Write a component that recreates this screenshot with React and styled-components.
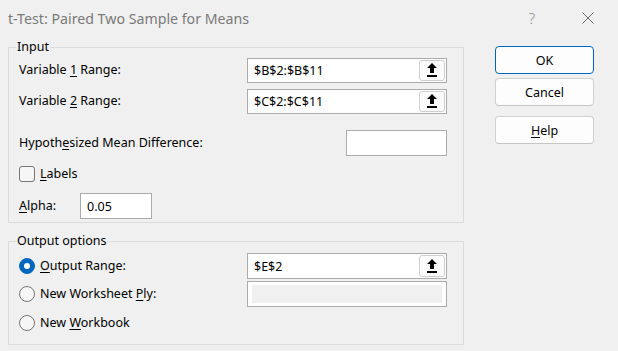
import React from 'react';
import styled, { createGlobalStyle } from 'styled-components';

const Global = createGlobalStyle`
  html, body { margin: 0; padding: 0; background: #f0f0f0; }
  body { font-family: "Noto Sans", "Open Sans", sans-serif; }
  #root { width: 618px; height: 351px; }
`;

const Window = styled.div`
  width: 618px;
  height: 351px;
  background: #f0f0f0;
  display: flex;
  flex-direction: column;
  overflow: hidden;
  color: #000;
  font-size: 12.5px;
`;

const TitleBar = styled.div`
  flex: none;
  height: 36px;
  display: flex;
  align-items: center;
  padding: 0 24px 0 8px;
  gap: 47px;
`;

const Title = styled.div`
  flex: 1;
  font-size: 14.2px;
  color: #7a7a7a;
  white-space: nowrap;
`;

const HelpGlyph = styled.span`
  font-size: 15px;
  color: #8a8a8a;
  font-weight: 300;
`;

const Body = styled.div`
  display: flex;
  padding: 3px 0 0 8px;
  gap: 31px;
`;

const LeftColumn = styled.div`
  width: 456px;
  display: flex;
  flex-direction: column;
  gap: 10px;
`;

const GroupBox = styled.fieldset`
  margin: 0;
  padding: 0 16px 0 7px;
  border: 1px solid #dcdcdc;
  min-width: 0;
`;

const Legend = styled.legend`
  padding: 0 1px;
  line-height: 16px;
  font-size: 12.5px;
`;

const GroupContent = styled.div`
  display: flex;
  flex-direction: column;
  padding: ${p => p.$top}px 0 ${p => p.$bottom}px 3px;
`;

const Row = styled.div`
  display: flex;
  align-items: center;
  justify-content: ${p => p.$spread ? 'space-between' : 'flex-start'};
  height: ${p => p.$h}px;
  margin-top: ${p => p.$mt || 0}px;
  gap: ${p => p.$gap || 0}px;
`;

const Label = styled.span`
  white-space: nowrap;
  line-height: 16px;
  width: ${p => p.$w ? `${p.$w}px` : 'auto'};
`;

const Key = styled.span`
  text-decoration: underline;
  text-underline-offset: 2px;
  text-decoration-thickness: 1px;
`;

const FieldBox = styled.div`
  box-sizing: border-box;
  width: ${p => p.$w}px;
  height: ${p => p.$h}px;
  border: 1px solid #ababab;
  background: #fff;
  display: flex;
  align-items: center;
  padding: ${p => p.$disabled ? '3px 4px' : '1px'};
`;

const FieldText = styled.span`
  flex: 1;
  padding-left: 5px;
  white-space: nowrap;
`;

const DisabledFill = styled.div`
  flex: 1;
  align-self: stretch;
  background: #f0f0f0;
`;

const PickButton = styled.div`
  box-sizing: border-box;
  width: 26px;
  align-self: stretch;
  border: 1px solid #cfcfcf;
  border-radius: 3px;
  background: #fbfbfb;
  display: flex;
  align-items: center;
  justify-content: center;
`;

const CheckBox = styled.span`
  box-sizing: border-box;
  width: 16px;
  height: 16px;
  border: 1px solid #767676;
  border-radius: 3px;
  background: #f6f6f6;
  flex: none;
`;

const Radio = styled.span`
  box-sizing: border-box;
  width: 16px;
  height: 16px;
  border-radius: 50%;
  flex: none;
  display: flex;
  align-items: center;
  justify-content: center;
  border: ${p => p.$on ? '1px solid #0067c0' : '1px solid #767676'};
  background: ${p => p.$on ? '#0067c0' : '#f6f6f6'};
  &::after {
    content: '';
    display: ${p => p.$on ? 'block' : 'none'};
    width: 6px;
    height: 6px;
    border-radius: 50%;
    background: #fff;
  }
`;

const ButtonColumn = styled.div`
  width: 99px;
  display: flex;
  flex-direction: column;
  padding-top: 7px;
`;

const DialogButton = styled.div`
  box-sizing: border-box;
  height: 28px;
  margin-top: ${p => p.$mt || 0}px;
  border: 1px solid ${p => p.$primary ? '#0067c0' : '#d0d0d0'};
  border-bottom-color: ${p => p.$primary ? '#0067c0' : '#c4c4c4'};
  border-radius: 4px;
  background: #fdfdfd;
  display: flex;
  align-items: center;
  justify-content: center;
`;

const UploadIcon = () => (
  <svg width="10" height="14" viewBox="0 0 10 14">
    <polygon points="5,0 10,5 7,5 7,10 3,10 3,5 0,5" fill="#000" />
    <rect x="0" y="12" width="10" height="2" fill="#000" />
  </svg>
);

const CloseIcon = () => (
  <svg width="12" height="12" viewBox="0 0 12 12">
    <path d="M0.5 0.5 L11.5 11.5 M11.5 0.5 L0.5 11.5" stroke="#6a6a6a" strokeWidth="1" fill="none" />
  </svg>
);

const RangeField = ({ value, h = 25 }) => (
  <FieldBox $w={200} $h={h}>
    <FieldText>{value}</FieldText>
    <PickButton><UploadIcon /></PickButton>
  </FieldBox>
);

export default function App() {
  return (
    <>
      <Global />
      <Window>
        <TitleBar>
          <Title>t-Test: Paired Two Sample for Means</Title>
          <HelpGlyph>?</HelpGlyph>
          <CloseIcon />
        </TitleBar>
        <Body>
          <LeftColumn>
            <GroupBox>
              <Legend>Input</Legend>
              <GroupContent $top={3} $bottom={3}>
                <Row $h={24} $spread>
                  <Label>Variable <Key>1</Key> Range:</Label>
                  <RangeField value="$B$2:$B$11" />
                </Row>
                <Row $h={24} $mt={7} $spread>
                  <Label>Variable <Key>2</Key> Range:</Label>
                  <RangeField value="$C$2:$C$11" />
                </Row>
                <Row $h={26} $mt={17} $spread>
                  <Label>Hypoth<Key>e</Key>sized Mean Difference:</Label>
                  <FieldBox $w={101} $h={26} />
                </Row>
                <Row $h={16} $mt={10} $gap={5}>
                  <CheckBox />
                  <Label><Key>L</Key>abels</Label>
                </Row>
                <Row $h={26} $mt={11}>
                  <Label $w={61}><Key>A</Key>lpha:</Label>
                  <FieldBox $w={72} $h={26}>
                    <FieldText>0.05</FieldText>
                  </FieldBox>
                </Row>
              </GroupContent>
            </GroupBox>
            <GroupBox>
              <Legend>Output options</Legend>
              <GroupContent $top={4} $bottom={8}>
                <Row $h={26} $spread>
                  <Row $h={16} $gap={5}>
                    <Radio $on />
                    <Label><Key>O</Key>utput Range:</Label>
                  </Row>
                  <RangeField value="$E$2" h={26} />
                </Row>
                <Row $h={26} $mt={2} $spread>
                  <Row $h={16} $gap={5}>
                    <Radio />
                    <Label>New Worksheet <Key>P</Key>ly:</Label>
                  </Row>
                  <FieldBox $w={200} $h={26} $disabled>
                    <DisabledFill />
                  </FieldBox>
                </Row>
                <Row $h={26} $mt={3}>
                  <Row $h={16} $gap={5}>
                    <Radio />
                    <Label>New <Key>W</Key>orkbook</Label>
                  </Row>
                </Row>
              </GroupContent>
            </GroupBox>
          </LeftColumn>
          <ButtonColumn>
            <DialogButton $primary>OK</DialogButton>
            <DialogButton $mt={4}>Cancel</DialogButton>
            <DialogButton $mt={10}><span><Key>H</Key>elp</span></DialogButton>
          </ButtonColumn>
        </Body>
      </Window>
    </>
  );
}
